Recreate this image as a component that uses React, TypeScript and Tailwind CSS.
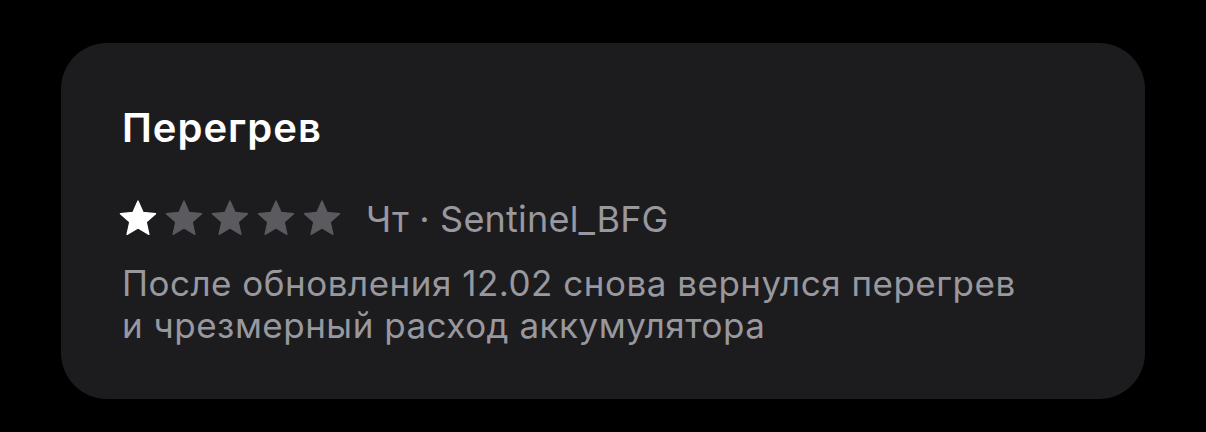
import React from 'react';

const Star = ({ filled }: { filled: boolean }) => (
  <svg viewBox="0 0 24 24" className="h-[40px] w-[40px]" fill={filled ? '#ffffff' : '#5a5a5f'}>
    <path d="M12 1.8l3.05 6.9 7.5.7-5.65 5 1.65 7.4L12 17.95 5.45 21.8l1.65-7.4-5.65-5 7.5-.7z" strokeLinejoin="round" stroke={filled ? '#ffffff' : '#5a5a5f'} strokeWidth={0.8} />
  </svg>
);

export default function App() {
  const rating = 1;

  return (
    <div className="w-[1206px] h-[432px] bg-black pt-[43px] pl-[61px]" style={{ fontFamily: 'Inter, "Noto Sans", sans-serif' }}>
      <div className="w-[1084px] h-[356px] rounded-[46px] bg-[#1c1c1e] pl-[61px] pt-[61px] flex flex-col">
        <h2 className="text-[40px] leading-[48px] font-semibold tracking-[1px] text-white self-start">
          Перегрев
        </h2>
        <div className="mt-[47px] flex items-center h-[40px]">
          <div className="flex gap-[6px] -ml-[4px] -mt-[3px]">
            {[0, 1, 2, 3, 4].map((i) => (
              <Star key={i} filled={i < rating} />
            ))}
          </div>
          <span className="ml-[24px] text-[36px] leading-[40px] tracking-[0.2px] text-[#98989e]">Чт · Sentinel_BFG</span>
        </div>
        <p className="mt-[23px] text-[35px] leading-[42px] tracking-[0.5px] text-[#98989e]">
          После обновления 12.02 снова вернулся перегрев
          <br />
          и чрезмерный расход аккумулятора
        </p>
      </div>
    </div>
  );
}
